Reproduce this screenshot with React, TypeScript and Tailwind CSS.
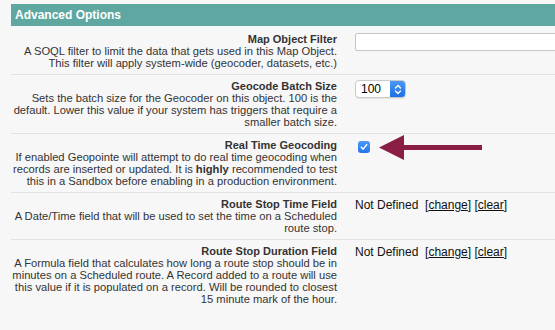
import React from "react";

interface OptionRow {
  label: string;
  lines: React.ReactNode[];
  value: React.ReactNode;
  first?: boolean;
  last?: boolean;
}

const NotDefined = () => (
  <div className="text-[12px] leading-[12px] text-[#111] whitespace-nowrap pt-[6px]">
    Not Defined&nbsp;&nbsp;[<span className="underline">change</span>] [<span className="underline">clear</span>]
  </div>
);

const BatchSelect = () => (
  <div className="mt-[5px] flex h-[18px] w-[51px] overflow-hidden rounded-[4px] border border-[#c9c9c9] bg-white shadow-[0_1px_1px_rgba(0,0,0,0.08)]">
    <div className="flex flex-1 items-center pl-[5px] text-[12px] text-black">100</div>
    <div className="flex w-[15px] items-center justify-center bg-gradient-to-b from-[#4b97f7] to-[#1e6fe6]">
      <svg width="8" height="11" viewBox="0 0 8 11">
        <path d="M1.5 4 L4 1.5 L6.5 4 M1.5 7 L4 9.5 L6.5 7" fill="none" stroke="white" strokeWidth="1.3" strokeLinecap="round" strokeLinejoin="round" />
      </svg>
    </div>
  </div>
);

const CheckedBox = () => (
  <div className="relative mt-[7px] ml-[3px] h-[12px] w-[12px]">
    <div className="flex h-[12px] w-[12px] items-center justify-center rounded-[3px] bg-gradient-to-b from-[#4c98f8] to-[#2474ea]">
      <svg width="8" height="8" viewBox="0 0 8 8">
        <path d="M1.3 4.3 L3.2 6.1 L6.7 1.6" fill="none" stroke="white" strokeWidth="1.5" strokeLinecap="round" strokeLinejoin="round" />
      </svg>
    </div>
    {/* annotation arrow */}
    <svg className="absolute left-[21px] top-[-6px]" width="103" height="25" viewBox="0 0 103 25">
      <polygon points="0,12.5 25,0 25,10 103,10 103,15 25,15 25,25" fill="#8b1e47" />
    </svg>
  </div>
);

const rows: OptionRow[] = [
  {
    label: "Map Object Filter",
    lines: [
      "A SOQL filter to limit the data that gets used in this Map Object.",
      "This filter will apply system-wide (geocoder, datasets, etc.)",
    ],
    value: <div className="mt-[7px] h-[18px] w-[230px] rounded-[2px] border border-[#c6c6c6] bg-white" />,
    first: true,
  },
  {
    label: "Geocode Batch Size",
    lines: [
      "Sets the batch size for the Geocoder on this object. 100 is the",
      "default. Lower this value if your system has triggers that require a",
      "smaller batch size.",
    ],
    value: <BatchSelect />,
  },
  {
    label: "Real Time Geocoding",
    lines: [
      "If enabled Geopointe will attempt to do real time geocoding when",
      <>
        records are inserted or updated. It is <b>highly</b> recommended to test
      </>,
      "this in a Sandbox before enabling in a production environment.",
    ],
    value: <CheckedBox />,
  },
  {
    label: "Route Stop Time Field",
    lines: [
      "A Date/Time field that will be used to set the time on a Scheduled",
      "route stop.",
    ],
    value: <NotDefined />,
  },
  {
    label: "Route Stop Duration Field",
    lines: [
      "A Formula field that calculates how long a route stop should be in",
      "minutes on a Scheduled route. A Record added to a route will use",
      "this value if it is populated on a record. Will be rounded to closest",
      "15 minute mark of the hour.",
    ],
    value: <NotDefined />,
    last: true,
  },
];

export default function App() {
  return (
    <div className="h-[330px] w-full overflow-hidden bg-[#f7f7f7] pt-[4px] pl-[11px] font-['Liberation_Sans',Arial,sans-serif]">
      <div className="flex h-[22px] items-center bg-[#5fa8a2] pl-[4px] text-[12px] font-bold text-white">
        Advanced Options
      </div>

      {rows.map((row) => (
        <div
          key={row.label}
          className={`flex ${row.last ? "" : "border-b border-[#e3e3e3]"} ${row.first ? "pt-[7px]" : "pt-[5px]"} pb-[5px]`}
        >
          <div className="w-[326px] shrink-0 text-right leading-[12px] text-[#333] whitespace-nowrap">
            <div className="text-[11px] font-bold">{row.label}</div>
            {row.lines.map((line, i) => (
              <div key={i} className="text-[11.2px]">{line}</div>
            ))}
          </div>
          <div className={`flex-1 pl-[18px] ${row.first ? "-mt-[7px]" : "-mt-[5px]"}`}>{row.value}</div>
        </div>
      ))}
    </div>
  );
}
